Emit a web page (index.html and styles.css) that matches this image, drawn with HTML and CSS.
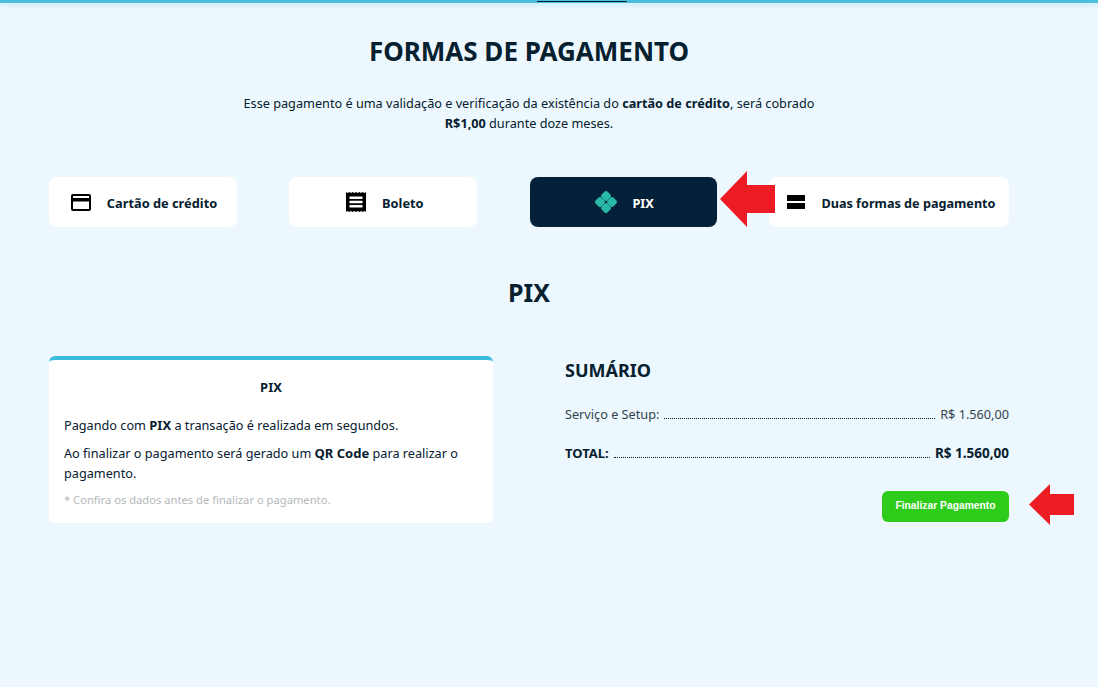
FILE: index.html
```html
<!DOCTYPE html>
<html>
<head>
    <title>Formas de Pagamento</title>
    <meta name="viewport" content="width=device-width, initial-scale=1">
    <link rel="stylesheet" href="styles.css">
</head>
<body>
    <div class="top-bar"><div class="top-tab"></div></div>

    <div class="container">
        <h1>FORMAS DE PAGAMENTO</h1>
        <p class="intro">Esse pagamento é uma validação e verificação da existência do <strong>cartão de crédito</strong>, será cobrado<br><strong>R$1,00</strong> durante doze meses.</p>

        <div class="methods">
            <div class="method-btn card-btn">
                <svg class="method-icon" width="20" height="17" viewBox="0 0 20 17"><path fill="#000" fill-rule="evenodd" d="M2 0h16a2 2 0 0 1 2 2v13a2 2 0 0 1-2 2H2a2 2 0 0 1-2-2V2a2 2 0 0 1 2-2zm0 2v2h16V2H2zm0 5.500V15h16V7.500H2z"/></svg>
                <span>Cartão de crédito</span>
            </div>
            <div class="method-btn boleto-btn">
                <svg class="method-icon" width="20" height="20" viewBox="0 0 20 20"><path fill="#000" fill-rule="evenodd" d="M0 0l1.670 1L3.330 0 5 1l1.670-1 1.660 1L10 0l1.670 1 1.660-1L15 1l1.670-1 1.660 1L20 0v20l-1.670-1-1.660 1L15 19l-1.670 1-1.660-1L10 20l-1.670-1-1.660 1L5 19l-1.670 1-1.660-1L0 20V0zm3.500 4.500V7h13V4.500h-13zm0 4.300v2.500h13V8.800h-13zm0 4.300v2.500h13v-2.500h-13z"/></svg>
                <span>Boleto</span>
            </div>
            <div class="method-btn active">
                <svg class="method-icon" width="24" height="24" viewBox="0 0 24 24"><g fill="#28b9a8"><rect x="7.900" y="1.900" width="8.200" height="8.200" rx="2" transform="rotate(45 12 6)"/><rect x="7.900" y="13.900" width="8.200" height="8.200" rx="2" transform="rotate(45 12 18)"/><rect x="1.900" y="7.900" width="8.200" height="8.200" rx="2" transform="rotate(45 6 12)"/><rect x="13.900" y="7.900" width="8.200" height="8.200" rx="2" transform="rotate(45 18 12)"/></g></svg>
                <span>PIX</span>
            </div>
            <div class="method-btn wide">
                <svg class="method-icon" width="18" height="14" viewBox="0 0 18 14"><path fill="#000" d="M0 0h18v6H0zM0 8h18v6H0z"/></svg>
                <span>Duas formas de pagamento</span>
            </div>
        </div>

        <h2>PIX</h2>

        <div class="details">
            <div class="card">
                <h3>PIX</h3>
                <p>Pagando com <strong>PIX</strong> a transação é realizada em segundos.</p>
                <p>Ao finalizar o pagamento será gerado um <strong>QR Code</strong> para realizar o pagamento.</p>
                <p class="note">* Confira os dados antes de finalizar o pagamento.</p>
            </div>

            <div class="summary">
                <h4>SUMÁRIO</h4>
                <div class="line">
                    <span>Serviço e Setup:</span>
                    <span class="dots"></span>
                    <span>R$ 1.560,00</span>
                </div>
                <div class="line total">
                    <span>TOTAL:</span>
                    <span class="dots"></span>
                    <span class="total-value">R$ 1.560,00</span>
                </div>
                <div class="actions">
                    <button type="button" class="btn">Finalizar Pagamento</button>
                </div>
            </div>
        </div>
    </div>

    <!-- arrows drawn over the page -->
    <svg class="arrow arrow-pix" width="55" height="56" viewBox="0 0 55 56"><path fill="#ed1c24" d="M0 28L27 0v14h28v28H27v14z"/></svg>
    <svg class="arrow arrow-pay" width="45" height="41" viewBox="0 0 45 41"><path fill="#ed1c24" d="M0 20.500L21 0v10h24v21H21v10z"/></svg>
</body>
</html>
```

FILE: styles.css
```css
* {
    box-sizing: border-box;
}
html, body {
    height: 100%;
}
body {
    font-family: "Noto Sans", "Open Sans", sans-serif;
    font-size: 12.700px;
    line-height: 20px;
    color: #06202f;
    background-color: #ecf8fe;
    margin: 0;
    overflow: hidden;
    position: relative;
}
.top-bar {
    height: 3px;
    background-color: #4abfdd;
    box-shadow: 0 1px 6px rgba(60, 188, 220, 0.35);
    position: relative;
}
.top-tab {
    position: absolute;
    left: 537px;
    top: 1px;
    width: 90px;
    height: 1px;
    background-color: #06202f;
}
.container {
    width: 960px;
    margin-left: 49px;
}
h1 {
    font-size: 26px;
    line-height: 34px;
    font-weight: 700;
    text-align: center;
    margin: 31px 0 0;
}
.intro {
    text-align: center;
    margin: 25px 0 0;
}
.methods {
    display: flex;
    justify-content: space-between;
    margin-top: 44px;
}
.method-btn {
    width: 188px;
    height: 50px;
    display: flex;
    align-items: center;
    justify-content: center;
    gap: 16px;
    padding-top: 1px;
    background-color: #fff;
    border-radius: 8px;
    font-size: 12.800px;
    font-weight: 700;
    color: #06202f;
}
.card-btn {
    padding-left: 2px;
}
.boleto-btn {
    padding-left: 3px;
}
.method-btn.active {
    width: 187px;
    gap: 14px;
    padding-left: 2px;
    background-color: #05213a;
    color: #fff;
}
.method-btn.wide {
    width: 240px;
    padding-left: 5px;
    font-size: 12.650px;
}
.method-icon {
    flex-shrink: 0;
    margin-top: -1px;
}
h2 {
    font-size: 25px;
    line-height: 34px;
    font-weight: 700;
    text-align: center;
    margin: 48px 0 0;
}
.details {
    display: flex;
    justify-content: space-between;
    align-items: flex-start;
    margin-top: 47px;
}
.card {
    width: 444px;
    height: 167px;
    background-color: #fff;
    border-top: 4px solid #3cbcdc;
    border-radius: 6px;
    padding: 17px 15px 0;
}
.card h3 {
    font-size: 13px;
    line-height: 20px;
    font-weight: 700;
    text-align: center;
    margin: 0 0 18px;
}
.card p {
    margin: 0 0 8px;
}
.card strong {
    font-size: 13px;
}
.card .note {
    font-size: 11.200px;
    color: #b5b8ba;
    margin: -1px 0 0;
}
.summary {
    width: 444px;
}
.summary h4 {
    font-size: 18px;
    line-height: 24px;
    font-weight: 700;
    margin: 2px 0 22px;
}
.line {
    display: flex;
    align-items: baseline;
    gap: 5px;
    color: #33434d;
    margin-bottom: 19px;
}
.line.total {
    font-size: 13px;
    font-weight: 700;
    color: #06202f;
}
.total-value {
    font-size: 13.500px;
}
.dots {
    flex: 1;
    border-bottom: 1px dotted #06202f;
}
.actions {
    display: flex;
    justify-content: flex-end;
    margin-top: 28px;
}
.btn {
    width: 127px;
    height: 31px;
    background-color: #2dcc1a;
    color: #fff;
    border: none;
    border-radius: 6px;
    font-family: "Liberation Sans", Arial, sans-serif;
    font-size: 10.300px;
    font-weight: 700;
    padding: 0 0 2px;
}
.arrow {
    position: absolute;
}
.arrow-pix {
    left: 720px;
    top: 171px;
}
.arrow-pay {
    left: 1029px;
    top: 484px;
}
```
